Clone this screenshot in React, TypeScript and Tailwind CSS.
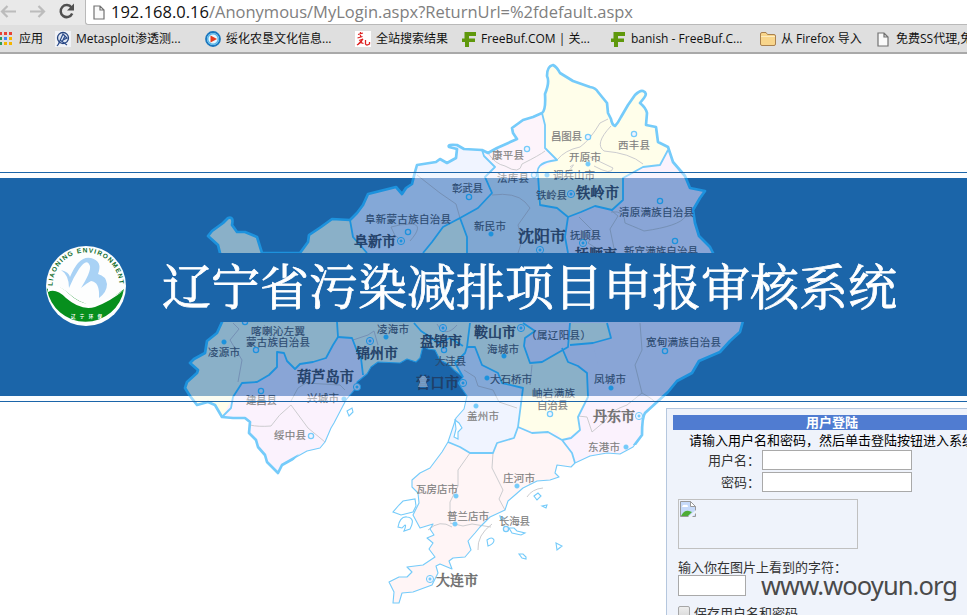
import React from "react";

type Palette = {
  yellow: string;
  pink: string;
  blue: string;
  violet: string;
  rose: string;
  line: string;
  minor: string;
  text: string;
  strong: string;
};

const light: Palette = {
  yellow: "#fffeea", pink: "#fdf4fb", blue: "#f0f4ff", violet: "#fbf2fd", rose: "#fff5f6",
  line: "#75cbfa", minor: "#cccccf", text: "#808080", strong: "#6c6c6c",
};
const dark: Palette = {
  yellow: "#8ab0c8", pink: "#80a7d2", blue: "#84a8d7", violet: "#89a5d6", rose: "#84a7d3",
  line: "#1d92dd", minor: "#7590b5", text: "#2c4a70", strong: "#203d66",
};

const outline =
  "M553 65 Q557 67 560 73 L573 81 L590 87 Q596 88 598 92 L607 103 L608 113 L611 119 Q612 125 615 126 Q618 123 621 117 L628 105 L635 95 Q640 90 643 91 Q648 93 644 98 L640 103 Q646 108 647 113 L646 125 L656 127 L658 142 L668 147 L673 162 L685 176 L690 188 L705 191 L700 198 L693 210 L695 223 L699 236 L710 247 L713 253 L743 321 L740 332 L730 341 L720 352 L699 361 L692 373 L677 381 L668 392 L657 402 L645 413 Q642 417 642 435 L633 447 L620 454 L607 453 L590 456 L575 463 L571 467 L557 465 L555 473 L559 477 L550 480 L537 481 L523 488 L515 495 L508 501 L505 510 L490 517 L480 527 L475 533 L468 541 L471 550 L465 557 L453 558 L449 561 L452 569 L440 564 L436 566 L438 573 L432 585 L413 592 L402 593 L399 603 L393 603 L394 592 L389 582 L399 577 L407 577 L412 572 L407 567 L423 565 L435 557 L429 549 L433 543 L427 538 L434 535 L430 529 L433 524 L420 528 L413 515 L419 503 L418 493 L412 487 L412 480 L420 473 L430 468 L442 452 L448 442 L456 418 L464 409 L467 396 L458 383 L463 377 L454 370 L448 364 L440 360 L435 350 L428 349 L423 346 L420 358 L416 362 L407 359 L400 363 L378 362 L371 367 L367 374 L357 382 L356 388 L346 400 L334 423 L331 428 L325 442 L320 448 L307 451 L282 465 L278 473 L267 462 L265 455 L258 447 L256 440 L249 433 L250 422 L245 418 L233 418 L222 417 L215 405 L208 402 L197 405 L190 396 L185 388 L187 382 L197 373 L198 370 L190 363 L194 359 L205 353 L207 341 L217 333 L222 322 L220 253 L218 245 L208 236 L212 231 L223 223 L228 218 Q234 216 232 225 L237 232 L245 232 L257 237 L262 253 L300 253 L308 242 L309 235 L321 227 L332 219 L350 220 L357 213 L363 205 L368 194 L396 187 L402 194 L406 188 L412 184 L415 172 L417 165 L436 162 L440 159 L447 163 L456 158 L457 149 L449 147 Q447 144 457 145 L464 149 L482 150 L488 153 L497 148 L517 139 L513 133 L512 128 L523 120 L533 117 L542 113 Q546 110 545 94 Q550 82 547 76 Q547 66 553 65 Z";

const regions: [keyof Palette, string][] = [
  ["yellow", "M542 50 L542 113 L545 125 L545 148 L557 160 L538 170 L538 205 L557 208 L568 217 L581 212 L595 206 L612 210 L623 200 L623 178 L643 167 L660 165 L668 148 L680 40 Z"],
  ["blue", "M400 130 L483 140 L484 156 L495 167 L485 177 L492 193 L478 208 L460 218 L443 227 L423 253 L367 253 L353 237 L352 219 L340 180 Z"],
  ["yellow", "M190 200 L352 219 L353 237 L367 253 L337 322 L338 337 L333 345 L326 358 L313 362 L300 364 L295 369 L287 361 L284 353 L277 352 L277 367 L269 375 L257 382 L242 383 L233 397 L229 408 L222 417 L170 430 L180 300 Z"],
  ["yellow", "M367 253 L423 253 L443 227 L460 218 L467 237 L467 253 L470 323 L467 347 L465 353 L455 365 L463 377 L440 385 L363 373 L360 357 L352 338 L338 337 L337 322 Z"],
  ["violet", "M568 217 L581 212 L595 206 L612 210 L623 200 L623 178 L643 167 L660 165 L668 148 L740 160 L760 325 L568 323 L565 237 Z"],
  ["violet", "M338 337 L352 338 L360 357 L363 373 L365 470 L220 490 L222 417 L233 397 L242 383 L257 382 L269 375 L277 367 L277 352 L284 353 L287 361 L295 369 L300 364 L313 362 L326 358 L333 345 Z"],
  ["violet", "M607 323 L611 338 L593 343 L570 345 L568 362 L587 373 L588 397 L578 417 L580 430 L562 440 L572 453 L575 470 L760 440 L760 323 Z"],
  ["yellow", "M470 323 L467 347 L475 347 L482 365 L498 373 L502 383 L523 388 L518 427 L543 433 L557 432 L562 440 L580 430 L578 417 L588 397 L587 373 L568 362 L562 348 L570 345 L593 343 L611 338 L607 323 Z"],
  ["violet", "M523 323 L535 331 L525 338 L524 346 L530 363 L542 362 L568 347 L570 323 Z"],
  ["violet", "M562 348 L570 345 L593 343 L600 375 L587 373 L578 366 L568 362 Z"],
  ["blue", "M467 347 L475 347 L482 365 L498 373 L502 383 L523 388 L518 427 L514 438 L495 443 L493 453 L470 453 L460 447 L440 441 L440 400 L463 377 L455 365 L465 353 Z"],
];

const borders = [
  "M542 113 L545 125 L545 148 L557 160 L551 161 Q535 164 538 175 L540 205 L557 208 L568 217 L581 212 L595 206 L612 210 L623 200 L623 178 L643 167 L660 165 L668 150",
  "M482 150 L484 156 L495 167 L485 177 L492 193 L478 208 L460 218 L443 227 L432 242 L423 253 M460 218 L467 237 L467 253",
  "M350 220 L353 237 L367 253 M568 217 L565 237 L568 253",
  "M337 322 L338 337 L333 345 L326 358 L313 362 L300 364 L295 369 L287 361 L284 353 L277 352 L277 367 L269 375 L257 382 L242 383 L233 397 L231 408 L222 417",
  "M338 337 L352 338 L357 351 L361 358 L363 375",
  "M470 323 L467 347 L465 353 L455 363 L463 377 M467 347 L475 347 L482 365 L498 373 L502 383 L523 388 L518 427 L514 438 L497 443 L493 453 L470 453 L460 447 L448 442",
  "M523 323 L535 331 L525 338 L524 346 L530 363 L542 362 L568 347 L570 323 M607 323 L611 338 L593 343 L570 345",
  "M562 348 L568 362 L578 366 L587 373 L588 397 L578 417 L580 430 L571 438 L562 440 M518 427 L532 433 L548 432 L562 440 L572 453 L575 463",
  "M414 323 L421 331 L430 337 L438 343 L450 338 L463 346",
];

const minors = [
  "M488 153 Q495 164 505 166 Q520 175 522 164 Q540 155 545 151",
  "M557 160 Q565 150 580 147 Q590 140 600 123 L608 119",
  "M611 126 Q594 144 604 151 Q630 153 643 164",
  "M588 156 L613 168 Q612 176 594 166 M562 180 Q570 170 565 175 Q579 160 570 167",
  "M417 175 L440 193 L456 204 L460 218 M492 195 Q515 192 525 202 L530 208 L518 225 L522 241 L518 253",
  "M410 241 Q424 225 412 224 Q400 224 391 227 Q394 236 399 239",
  "M611 212 Q625 210 625 223 Q642 230 644 231 Q679 226 685 217 M612 211 L618 216 L610 229 L615 253",
  "M579 217 L586 224 L595 233 L588 243 L596 248",
  "M233 323 L239 329 L230 340 L242 360 L238 382 M264 325 L282 345 M291 401 L298 388 L306 383 L340 385 L345 390",
  "M291 405 Q278 415 271 426 Q258 427 250 425 M291 405 L308 428 L325 442",
  "M353 340 L368 335 L374 331 L378 345",
  "M437 324 Q445 339 457 325 M464 370 L475 377 L478 386 L493 390 L499 402 L517 408",
  "M640 323 L642 350 L635 365 L642 393 Q653 399 657 404 M642 393 L627 405 Q609 411 605 421 L592 432 L587 417 L578 416",
  "M470 453 L458 470 L458 486 L450 502 L450 522 M493 453 L492 468 L503 490 L499 499 L505 510",
  "M450 523 L463 526 L472 524 L491 527 M492 524 Q477 535 478 550 M543 488 Q532 489 527 497 M532 365 L530 385",
  "M428 530 Q440 519 452 527",
];

type Label = [string, number, number, number, "s" | "n"];
const labels: Label[] = [
  ["昌图县", 551, 140, 31, "n"], ["西丰县", 618, 149, 32, "n"], ["康平县", 492, 159, 32, "n"], ["开原市", 569, 161, 32, "n"],
  ["法库县", 497, 182, 32, "n"], ["调兵山市", 553, 179, 42, "n"], ["彰武县", 452, 192, 31, "n"], ["铁岭县", 536, 199, 31, "n"],
  ["铁岭市", 576, 198, 43, "s"], ["清原满族自治县", 619, 216, 75, "n"], ["阜新蒙古族自治县", 365, 223, 86, "n"],
  ["新民市", 474, 230, 32, "n"], ["阜新市", 354, 246, 42, "s"], ["沈阳市", 518, 242, 48, "s"], ["抚顺县", 570, 239, 31, "n"],
  ["抚顺市", 575, 259, 42, "s"], ["新宾满族自治县", 624, 255, 74, "n"], ["喀喇沁左翼", 251, 335, 54, "n"],
  ["蒙古族自治县", 246, 346, 64, "n"], ["凌源市", 208, 356, 32, "n"], ["凌海市", 377, 333, 32, "n"], ["锦州市", 356, 358, 42, "s"],
  ["葫芦岛市", 297, 382, 57, "s"], ["建昌县", 246, 404, 31, "n"], ["兴城市", 307, 402, 32, "n"], ["绥中县", 274, 439, 32, "n"],
  ["盘锦市", 420, 346, 42, "s"], ["鞍山市", 474, 337, 42, "s"], ["（属辽阳县）", 526, 339, 65, "n"], ["海城市", 487, 353, 32, "n"],
  ["大洼县", 435, 365, 31, "n"], ["营口市", 416, 388, 43, "s"], ["大石桥市", 490, 383, 42, "n"], ["岫岩满族", 532, 397, 43, "n"],
  ["自治县", 537, 409, 31, "n"], ["盖州市", 467, 420, 32, "n"], ["宽甸满族自治县", 646, 346, 75, "n"], ["凤城市", 594, 383, 32, "n"],
  ["丹东市", 593, 421, 42, "s"], ["东港市", 588, 451, 32, "n"], ["庄河市", 503, 482, 32, "n"], ["瓦房店市", 416, 493, 42, "n"],
  ["普兰店市", 447, 520, 42, "n"], ["长海县", 499, 525, 31, "n"], ["大连市", 436, 585, 42, "s"],
];

const hollow = [[588, 137], [634, 134], [527, 149], [534, 175], [469, 197], [408, 232], [660, 201], [675, 241], [256, 350], [261, 391], [311, 436], [444, 350], [550, 414], [665, 351], [506, 529], [245, 322]];
const solid = [[588, 164], [547, 175], [491, 234], [224, 342], [386, 337], [344, 399], [504, 356], [487, 378], [476, 406], [611, 388], [626, 447], [517, 486], [456, 496], [455, 524]];
const target = [[571, 194], [401, 241], [540, 250], [583, 243], [370, 341], [357, 387], [443, 328], [521, 328], [463, 383], [639, 416], [430, 579]];

function ProvinceMap({ p, id, children }: { p: Palette; id: string; children: React.ReactNode }) {
  return (
    <g clipPath={`url(#${id})`}>
      <clipPath id={id}>{children}</clipPath>
      <clipPath id={id + "-land"}><path d={outline} /></clipPath>
      <g clipPath={`url(#${id}-land)`}>
        <rect x="170" y="54" width="600" height="561" fill={p.pink} />
        <path d="M440 430 H580 V615 H380 V500Z" fill={p.rose} />
        {regions.map(([c, d], i) => <path key={i} d={d} fill={p[c]} />)}
      </g>
      <g fill="none" stroke={p.minor} strokeWidth="1">{minors.map((d, i) => <path key={i} d={d} />)}</g>
      <g fill="none" stroke={p.line} strokeWidth="1.8" strokeLinejoin="round">
        {borders.map((d, i) => <path key={i} d={d} />)}
        <path d={outline} strokeWidth="1.1" />
      </g>
      <g fill="none" stroke={p.line} strokeWidth="2.7" strokeLinejoin="round">
        <clipPath id={id + "-edge"}>
          <path d="M180 54 H770 V400 L643 445 H510 V300 H350 V390 L278 480 H170Z" />
        </clipPath>
        <path clipPath={`url(#${id}-edge)`} d={outline} />
      </g>
      <g fill="#fff" stroke={p.line} strokeWidth="1.1">
        <path d="M413 512 L401 515 L393 512 L399 505 L403 501 L415 499 L416 506Z M398 527 Q400 516 407 517 Q416 518 410 529 L404 531 Q408 521 402 528Z M455 420 l4 3 l3 5 l-4 4 l0 7 l-4 -2 l2-8z M347 411 l5 -3 l1 4 l-4 4z" />
        <path d="M534 496 l4-3 l3 3 l-4 4z M542 506 l5-1 l-1 3z M487 540 q5-4 7 0 q0 4-6 6z M519 554 l4 0 l3 3 l0 2 l-4 -1z M556 543 l6 3 l-5 4z M509 528 l5 0 l3 3 l8 2 l-4 2 l-9-2z M500 516 l4 2 l-3 2z" />
      </g>
      <g stroke={p.line}>
        {hollow.map(([x, y], i) => <circle key={i} cx={x} cy={y} r="2.6" fill={p.blue} strokeWidth="1.3" />)}
        {solid.map(([x, y], i) => <circle key={i} cx={x} cy={y} r="2.3" fill={p.line} strokeWidth=".5" />)}
        {target.map(([x, y], i) => (
          <g key={i}>
            <circle cx={x} cy={y} r="3.6" fill={p.blue} strokeWidth="1" />
            <circle cx={x} cy={y} r="1.2" fill={p.line} strokeWidth=".6" />
          </g>
        ))}
      </g>
      {labels.map(([t, x, y, w, k], i) => (
        <text
          key={i} x={x} y={y} textLength={w} fill={k === "s" ? p.strong : p.text}
          fontSize={k === "s" ? w / t.length : 10.5}
          stroke={k === "s" ? p.strong : p.text} strokeWidth={k === "s" ? 0.5 : 0.15}
          className={k === "s" ? "font-['Noto_Serif_CJK_SC','Noto_Sans_CJK_SC',serif] font-medium" : "font-['Noto_Sans_CJK_SC',sans-serif]"}
        >{t}</text>
      ))}
    </g>
  );
}

function FreeBuf() {
  return <svg width="15" height="15" viewBox="0 0 15 15" className="shrink-0"><path fill="#5f980c" d="M2.500 0H14V4H7v2.500h6V10H7v5H3v-5H0V6.500h2.500z" /></svg>;
}
function PageIcon() {
  return (
    <svg width="12" height="15" viewBox="0 0 12 15" className="shrink-0">
      <path d="M1 1h6l4 4v9H1z M7 1v4h4" fill="#fafafa" stroke="#727272" strokeWidth="1.2" />
    </svg>
  );
}

function Toolbar() {
  return (
    <div className="flex h-[25px] bg-[#e9e9e9]">
      <div className="flex w-[85px] shrink-0 items-start">
        <svg width="85" height="25" viewBox="0 0 85 25" fill="none">
          <path d="M16 11.5H2 M7.500 6L2 11.500L7.500 17 M30 11.500H44 M38.500 6L44 11.500L38.500 17" stroke="#bcbcbc" strokeWidth="2.2" />
          <path d="M71.500 7.500A6 6 0 1 0 72.200 13.500" stroke="#505050" strokeWidth="2.500" />
          <path d="M74 3.500V10.500H67z" fill="#505050" />
        </svg>
      </div>
      <div className="flex h-[25px] flex-1 items-center rounded-bl-[3px] border-b border-l border-[#b9b9b9] bg-white pl-[7px]">
        <PageIcon />
        <svg width="540" height="24" className="ml-[6px] block font-['Open_Sans','Noto_Sans',sans-serif]">
          <text x="0" y="18" textLength="522" fill="#808080" fontSize="16.5"><tspan fill="#111">192.168.0.16</tspan>/Anonymous/MyLogin.aspx?ReturnUrl=%2fdefault.aspx</text>
        </svg>
      </div>
    </div>
  );
}

function Bookmark({ icon, text, box, gap }: { icon: React.ReactNode; text: string; box: string; gap: string }) {
  return <div className={`flex shrink-0 items-center whitespace-nowrap ${gap} ${box}`}>{icon}<span>{text}</span></div>;
}

function Bookmarks() {
  return (
    <div className="flex h-[29px] items-center overflow-hidden border-b-2 border-[#a9a9a9] bg-[#dfdfdf] pt-px font-['Open_Sans','Noto_Sans_CJK_SC',sans-serif] text-[12px] leading-[20px] text-[#111]">
      <Bookmark box="w-[55px]" gap="gap-[6px]" text="应用" icon={
        <svg width="13" height="14" viewBox="0 0 13 14" className="shrink-0">
          <path fill="#e84335" d="M0 0h2v3H0zM4 0h3v3H4zM9 0h3v3H9z" />
          <path fill="#2f9c57" d="M0 5h2v3H0z" /><path fill="#4285f4" d="M4 5h3v3H4z" /><path fill="#f4b400" d="M9 5h3v3H9zM4 10h3v3H4zM9 10h3v3H9z" /><path fill="#2f9c57" d="M0 10h2v3H0z" />
        </svg>} />
      <Bookmark box="w-[150px]" gap="gap-[5px]" text="Metasploit渗透测..." icon={
        <svg width="16" height="16" viewBox="0 0 16 16" className="shrink-0">
          <rect width="16" height="16" fill="#f0f2f7" />
          <circle cx="8" cy="7" r="5.500" fill="#dfe7f3" stroke="#27457f" strokeWidth="1.300" />
          <path d="M3 14L8 3l2 2-3 6M5 9l7 5M9 4l3 3-4 2M2 15l3-4" stroke="#2b4b8b" strokeWidth="1.200" fill="none" />
        </svg>} />
      <Bookmark box="w-[150px]" gap="gap-[5px]" text="绥化农垦文化信息..." icon={
        <svg width="16" height="16" viewBox="0 0 16 16" className="shrink-0">
          <circle cx="8" cy="8" r="7" fill="#e8f6ff" stroke="#1976be" strokeWidth="1.800" />
          <circle cx="8" cy="8" r="5.300" fill="none" stroke="#56b6e9" strokeWidth="1.500" /><path d="M5.500 4.500L12 8l-6.500 3.500z" fill="#e53a1d" />
        </svg>} />
      <Bookmark box="w-[107px]" gap="gap-[5px]" text="全站搜索结果" icon={
        <svg width="16" height="16" viewBox="0 0 16 16" className="shrink-0">
          <rect width="16" height="16" fill="#fff" />
          <path d="M3 3.500l5-1.500M5.500 1v5M2.500 7l5-1.500M4 9.500l4-1.500-5 5.500M7 8.500l-1 3 2.500 1M10.500 9v4q1 2 4 0v-2M2 14l3-2" stroke="#dd2222" strokeWidth="1.300" fill="none" />
        </svg>} />
      <Bookmark box="w-[149px]" gap="gap-[4px]" text="FreeBuf.COM | 关..." icon={<FreeBuf />} />
      <Bookmark box="w-[149px]" gap="gap-[5px]" text="banish - FreeBuf.C..." icon={<FreeBuf />} />
      <Bookmark box="w-[117px]" gap="gap-[5px]" text="从 Firefox 导入" icon={
        <svg width="16" height="14" viewBox="0 0 16 14" className="shrink-0">
          <path d="M.5 2Q.5.5 2 .5h4l1.500 2H14q1.500 0 1.500 1.500v8q0 1.500-1.500 1.500H2Q.5 13.500.5 12z" fill="#f8d58b" stroke="#a9814f" /><path d="M1 4.500h14" stroke="#fdecc0" />
        </svg>} />
      <Bookmark box="w-[120px]" gap="gap-[7px]" text="免费SS代理,免费" icon={<PageIcon />} />
    </div>
  );
}

function Logo() {
  return (
    <svg width="82" height="82" viewBox="-41 -41 82 82" className="-mt-[4px] shrink-0">
      <circle r="40" fill="#fdfefe" />
      <path d="M-39 3Q-30-4-18 7Q-3 20 7 18Q20 18 38 3A39 39 0 0 1-39 3Z" fill="#078f1d" />
      <path d="M-38 6Q-30 2-20 12Q-5 25 9 21Q25 15 38 4Q25 13 9 17Q-3 21-18 7Q-30-5-38 2Z" fill="#fff" />
      <path d="M-25-16Q-17-14-16-9Q-7-31 5-28Q17-25 12-12Q20-10 21-2Q21 6 13 12Q14-4 5-5Q1-3-5 2Q5-14 4-20Q1-29-7-17Q-13-8-17 2Q-17-11-25-16Z" fill="#a9d2f5" />
      <path id="logo-arc" d="M-33.500 0A33.500 33.500 0 1 1 33.500 0" fill="none" />
      <text fill="#0d6b2a" fontSize="6.500" textLength="103" className="font-['Liberation_Sans',sans-serif] font-bold"><textPath href="#logo-arc">LIAONING ENVIRONMENT</textPath></text>
      <text x="-15" y="32" fill="#fff" fontSize="4.500" textLength="31" className="font-['Noto_Sans_CJK_SC',sans-serif] font-bold">辽宁环保</text>
    </svg>
  );
}

function LoginPanel() {
  const field = "border border-[#a9a9a9] bg-white outline-none";
  return (
    <form className="ml-[666px] mt-[6px] h-[260px] w-[332px] border border-[#b5c7de] bg-[#eff3fb] p-[6px] font-['Liberation_Sans','Noto_Sans_CJK_SC',sans-serif] text-[13px] text-[#333]">
      <h2 className="h-[15px] bg-[#507cd1] text-center font-bold leading-[16px] text-white">用户登陆</h2>
      <p className="h-[20px] whitespace-nowrap text-center leading-[21px] text-black">请输入用户名和密码，然后单击登陆按钮进入系统</p>
      <div className="flex h-[22px] items-start"><label className="w-[89px] pr-[2px] text-right leading-[21px]">用户名：</label><input className={`h-[20px] w-[150px] ${field}`} /></div>
      <div className="flex h-[22px] items-start"><label className="w-[89px] pr-[2px] text-right leading-[21px]">密码：</label><input className={`h-[20px] w-[150px] ${field}`} /></div>
      <div className="ml-[5px] mt-[5px] h-[50px] w-[180px] border border-[#c0c0c0] p-px">
        <svg width="16" height="16" viewBox="0 0 16 16">
          <path d="M.5.500h10l5 5v10H.5z" fill="#c6dafa" stroke="#999" />
          <path d="M2 6q1-3 3-2 3-1 3 2z" fill="#fff" /><path d="M1 15q3-6 8-5l3 1-4 4z" fill="#4eac36" /><path d="M10.500.500v5h5z" fill="#fff" stroke="#999" /><path d="M8 16l8-7v3l-4 4z" fill="#eff3fb" />
        </svg>
      </div>
      <p className="ml-[5px] mt-[8px] h-[18px] leading-[21px]">输入你在图片上看到的字符：</p>
      <div className="ml-[5px] flex h-[28px] items-start">
        <input className={`h-[21px] w-[68px] ${field}`} />
        <svg width="210" height="34" className="ml-[15px] -mt-[4px] shrink-0"><text x="0" y="23.5" textLength="197" fontSize="25.5" fill="#4a4a4a" className="font-['Noto_Sans','Open_Sans',sans-serif]">www.wooyun.org</text></svg>
      </div>
      <div className="ml-[5px] mt-[3px] flex items-start gap-[4px]">
        <span className="h-[12px] w-[12px] rounded-[2px] border border-[#a6a6a6] bg-gradient-to-b from-[#eeeeee] to-[#d9d9d9]" />
        <span className="leading-[15px]">保存用户名和密码。</span>
      </div>
    </form>
  );
}

export default function App() {
  return (
    <div className="relative h-[615px] w-[967px] overflow-hidden bg-white">
      <Toolbar />
      <Bookmarks />
      <main className="flex flex-col pt-[118px]">
        <div className="h-px bg-[#1b65a9]" />
        <div className="mt-[5px] flex h-[218px] items-center bg-[#1b65a9] pt-px">
          <div className="relative z-20 flex h-[69px] w-full items-center bg-[#1b65a9] pl-[45px]">
            <Logo />
            <h1 className="-mt-[7px] ml-[35px] whitespace-nowrap font-['Noto_Serif_CJK_SC','Noto_Sans_CJK_SC',serif] text-[49px] font-normal leading-[69px] text-white [-webkit-text-stroke:0.8px_white]">辽宁省污染减排项目申报审核系统</h1>
          </div>
        </div>
        <div className="relative z-20 mt-[5px] h-px bg-[#1b65a9]" />
        <div className="relative z-20"><LoginPanel /></div>
      </main>
      <svg width="967" height="615" viewBox="0 0 967 615" className="pointer-events-none absolute left-0 top-0 z-10">
        <ProvinceMap p={light} id="paper"><path d="M0 54H967V178H0Z M0 396H967V615H0Z" /></ProvinceMap>
        <path d="M0 173H967V178H0Z M0 396H967V401H0Z" fill="#f3fafe" opacity=".35" />
        <path d="M0 172H967V173H0Z" fill="#1b65a9" />
        <ProvinceMap p={dark} id="band"><path d="M0 178H967V396H0Z" /></ProvinceMap>
        <path d="M418 387l2-5-1-3 3-3h3l2 3-1 3 2 5z" fill="#9bb9dc" opacity=".7" />
      </svg>
    </div>
  );
}
